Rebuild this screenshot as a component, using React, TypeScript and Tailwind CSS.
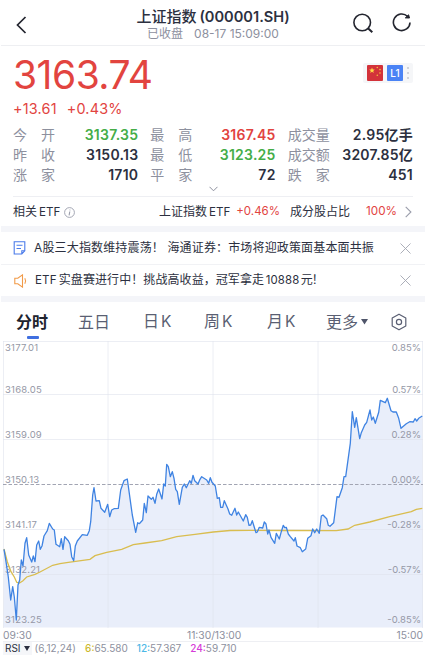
import React from 'react';

interface Stat {
  label: string;
  value: string;
  color?: string;
}

const stats: Stat[] = [
  { label: '今开', value: '3137.35', color: 'text-[#45ad48]' },
  { label: '最高', value: '3167.45', color: 'text-[#e2443f]' },
  { label: '成交量', value: '2.95亿手' },
  { label: '昨收', value: '3150.13' },
  { label: '最低', value: '3123.25', color: 'text-[#45ad48]' },
  { label: '成交额', value: '3207.85亿' },
  { label: '涨家', value: '1710' },
  { label: '平家', value: '72' },
  { label: '跌家', value: '451' },
];

const pricePoints =
  '4,549.3 6,561.7 8.3,577 10.7,600 12.7,586.7 14.3,597 16.3,620 18,585 19.7,580 21.3,560 23,566 25,543.3 26.7,537.7 28.7,555 31.7,562 33.3,556 35,561.7 36.7,545 38.7,541 40.3,549.3 42,546 44,536 47.3,530.7 49.3,523.3 52.7,529 54.3,530 56,544.3 59.7,546.7 61.3,538.7 63,549.3 64.7,536.7 68.3,540.7 70,544.3 71.7,556.7 73.7,560.7 75.3,546 77.3,541 82.3,534.7 87.3,535.3 89.3,530.7 90.7,521.7 92.7,495 94,487.7 96,501 99.3,500.7 101,508.3 104.7,512.3 107.7,504.3 109.7,516.7 111.7,510 114,508.7 118.3,508.3 120.7,490 124,480.7 127.3,479 129.3,493.3 132.3,515 135.7,532.3 137.7,522.7 139.3,523.7 142.7,520 144.3,503.3 146.3,512.7 148,496 151.3,499.3 153,497.3 155,503.3 156.7,494.3 158.7,489 162,499 163.7,484 165.3,486 166.7,464.3 168.3,466.7 170.3,476.7 172.3,471.7 174,478.3 175.7,489.3 177.3,491.7 179.3,504.3 182.3,487.3 184.3,484 186.3,487.7 189.7,480.7 191.3,483.3 193,475.3 194.7,480.7 198,484 200,479.3 201.7,476.7 206.7,480 208.7,483.3 210.3,477.7 212,482.3 215.3,486 217.3,498.3 219.3,497.7 220.7,507.3 222.7,507.3 224.3,500.7 228,509 229.7,514 231.7,515.3 235,508.3 236.7,515 238.3,512 243.3,521 245.7,514.7 247.3,517.3 249,525.3 250.7,525 252.3,520.7 256,532.7 257.3,532 259.3,527.3 262.7,528 264.3,522 266,524 267.7,534 269,530 271,537.3 274.7,543.3 276.3,533.3 279.3,539 281.3,531.7 283.3,525.3 284.7,527.7 286.3,527.3 288.3,534 290.3,536.7 294,541 295.3,537.7 297,546 300.3,547.7 302.3,551.7 305.7,549 307.7,538.3 311,535.7 312.7,529 314.7,532.7 316.7,529 319.3,533.3 321.3,516 323,515 326.7,518.7 328.3,525.3 330,526.3 333.7,522.7 337,496.7 339,497.3 342.3,487.7 344,476.7 345.7,476.7 350.3,443.3 352.3,411.7 354.7,427.3 356.3,417.7 359.7,438.7 361.3,432.7 364.7,425 366.7,422.3 370,410 371.7,420 373.3,417 375.3,423.3 378.7,412.3 380.3,400.3 385.3,402.7 387.3,398.3 391,410.7 393,412 396.3,412 398.7,418.3 401,428.3 406.3,423.7 409.7,421.7 413.3,422 415,418.7 416.7,421 418.7,418.3 422.3,416';

const averagePoints =
  '4,549 7.3,561.7 11,571.7 14.3,577 16.7,582.3 19.3,583 22.7,581 26.7,577 35,574.3 40,572 52.7,565.3 60,563.6 68.3,562.3 90,559.3 95,555.7 106.7,552.3 121.7,549.3 133.3,544.6 145,543 161.7,540.7 176.7,536.7 195,534.3 213.3,532 230,530.5 250,530.3 285,530.5 336.3,530.7 348,529 354.7,525.3 369.7,522 389.7,516.7 411.3,511.7 416.3,509.3 422.3,508.3';

const levels = [
  { y: 351, price: '3177.01', pct: '0.85%' },
  { y: 393, price: '3168.05', pct: '0.57%' },
  { y: 438, price: '3159.09', pct: '0.28%' },
  { y: 483, price: '3150.13', pct: '0.00%' },
  { y: 528, price: '3141.17', pct: '-0.28%' },
  { y: 573, price: '3132.21', pct: '-0.57%' },
  { y: 622.5, price: '3123.25', pct: '-0.85%' },
];

const Header = () => (
  <header className="h-[46px] border-b border-[#eeeff2] flex items-start justify-between pl-[14px] pr-[13px]">
    <svg className="mt-[16px] w-[59px] h-[18px]" viewBox="0 0 59 18" fill="none" stroke="#23252f" strokeWidth="1.7">
      <path d="M10.5 1 2.5 9l8 8" />
    </svg>
    <div className="text-center pt-[7px] -ml-px">
      <h1 className="text-[15px] leading-[19px] font-semibold text-[#2c3040] whitespace-nowrap">
        <span className="font-medium">上证指数</span>
        <span className="ml-[3px] text-[14.6px]">(000001.SH)</span>
      </h1>
      <p className="text-[12px] leading-[14px] text-[#8d909e] whitespace-nowrap">
        已收盘<span className="ml-[11px]">08-17 15:09:00</span>
      </p>
    </div>
    <div className="flex w-[59px] justify-between pt-[12px]">
      <svg className="w-[21px] h-[22px]" viewBox="0 0 21 22" fill="none" stroke="#23252f" strokeWidth="1.6">
        <circle cx="9.2" cy="10.5" r="8.3" />
        <path d="m15 16.2 4.3 4" strokeWidth="2" />
      </svg>
      <svg className="w-[20px] h-[22px]" viewBox="0 0 20 22" fill="none" stroke="#23252f" strokeWidth="1.6">
        <path d="M15.5 4.3A8.3 8.3 0 1 0 18 10.5" />
        <path d="m16.6 2.8.9 3.2-4.2-.1z" fill="#23252f" strokeWidth="1" />
      </svg>
    </div>
  </header>
);

const Quote = () => (
  <section className="px-[12px] h-[79px] flex justify-between">
    <div className="text-[#e2443f]">
      <div className="mt-[9px] text-[39px] leading-[39px] tracking-[-0.5px]">3163.74</div>
      <div className="mt-[6px] text-[14.4px] leading-[17px] tracking-[0.2px] flex gap-[10px]">
        <span>+13.61</span>
        <span>+0.43%</span>
      </div>
    </div>
    <div className="mt-[17px] w-[50px] h-[20px] bg-[#f5f6f8] rounded-[2px] flex items-center pl-[4px] gap-[4px]">
      <svg className="w-[16px] h-[16px]" viewBox="0 0 16 16">
        <rect width="16" height="16" rx="1" fill="#d3323a" />
        <path d="m5 2.6.8 2h2l-1.6 1.3.6 2L5 6.7 3.2 7.9l.6-2-1.6-1.3h2z" fill="#ffd944" />
        <g fill="#f5bf3f">
          <circle cx="10.3" cy="2.5" r=".8" />
          <circle cx="13" cy="4.6" r=".8" />
          <circle cx="13" cy="8" r=".8" />
          <circle cx="10.3" cy="10.3" r=".8" />
        </g>
      </svg>
      <span className="w-[16px] h-[16px] rounded-[1px] bg-[#4a83f5] text-white text-[10px] leading-[17px] font-medium text-center">L1</span>
      <svg className="w-[3px] h-[14px]" viewBox="0 0 3 14" fill="#d0d3da">
        <rect y="1" width="2" height="2" />
        <rect y="6" width="2" height="2" />
        <rect y="11" width="2" height="2" />
      </svg>
    </div>
  </section>
);

const Stats = () => (
  <section className="mx-[12px] h-[72px] border-b border-[#eeeff3]">
    <div className="grid grid-cols-3 gap-x-[12px]">
      {stats.map((s) => (
        <div key={s.label} className="h-[20px] leading-[20px] flex justify-between text-[14px] whitespace-nowrap">
          <span className="w-[42px] flex justify-between text-[#8d909e]">
            {s.label.split('').map((c) => (
              <span key={c}>{c}</span>
            ))}
          </span>
          <span className={`font-semibold tracking-[0.25px] ${s.color || 'text-[#2c3040]'}`}>{s.value}</span>
        </div>
      ))}
    </div>
    <svg className="mx-auto mt-[1px] w-[9px] h-[6px]" viewBox="0 0 9 6" fill="none" stroke="#8d909e">
      <path d="m.5.8 4 4 4-4" />
    </svg>
  </section>
);

const EtfRow = () => (
  <section className="h-[29px] px-[12px] pt-px flex items-center text-[12px] text-[#2c3040] whitespace-nowrap">
    <span>相关<span className="ml-[2px] text-[11.6px]">ETF</span></span>
    <svg className="ml-[4px] w-[11px] h-[11px]" viewBox="0 0 11 11" fill="none" stroke="#9a9dab" strokeWidth=".9">
      <circle cx="5.5" cy="5.5" r="4.9" />
      <path d="M5.8 4.5 5.1 8.4M6 2.6l-.1.8" strokeWidth="1.1" />
    </svg>
    <span className="ml-auto">上证指数<span className="ml-[2px] text-[11.6px]">ETF</span></span>
    <span className="ml-[6px] text-[11.5px] text-[#e2443f]">+0.46%</span>
    <span className="ml-[10px]">成分股占比</span>
    <span className="ml-[16px] text-[11.7px] text-[#e2443f]">100%</span>
    <svg className="ml-[8px] mr-[1px] w-[7px] h-[12px]" viewBox="0 0 7 12" fill="none" stroke="#9a9dab" strokeWidth="1.1">
      <path d="m.7.8 5.2 5.2-5.2 5.2" />
    </svg>
  </section>
);

const CloseIcon = () => (
  <svg className="ml-auto mr-[2px] w-[11px] h-[11px]" viewBox="0 0 11 11" stroke="#a3a6b1" strokeWidth=".9">
    <path d="m.5.5 10 10M10.5.5l-10 10" />
  </svg>
);

const Notices = () => (
  <section className="border-y-[6px] border-[#f4f5f9] text-[12px] tracking-[0.15px] text-[#2c3040] whitespace-nowrap">
    <div className="h-[33px] px-[12px] flex items-center border-b border-[#f1f2f5]">
      <svg className="w-[13px] h-[14px] mr-[8px]" viewBox="0 0 13 14" fill="none" stroke="#4a7bea" strokeWidth="1.1">
        <path d="M1.2.8h10.6v9L8.8 13H1.2zM3.5 4.3h6M3.5 7.5h4.5M12 9.7H8.8V13" />
      </svg>
      <span>A股三大指数维持震荡！ 海通证券：市场将迎政策面基本面共振</span>
      <CloseIcon />
    </div>
    <div className="h-[31px] px-[12px] flex items-center">
      <svg className="w-[14px] h-[14px] ml-[1px] mr-[7px]" viewBox="0 0 14 14" fill="none" stroke="#f19a48" strokeWidth="1.1">
        <path d="M.8 4.3h3L8.5.9v12.2L3.8 9.7h-3z" />
        <path d="M10.8 4.2q1.7 2.8 0 5.6" />
      </svg>
      <span>
        <span className="text-[11.6px]">ETF</span>
        <span className="ml-[2px] tracking-[0.08px]">实盘赛进行中！挑战高收益，冠军拿走</span>
        <span className="mx-[1.5px] text-[11.4px]">10888</span>
        <span className="tracking-[-1px]">元！</span>
      </span>
      <CloseIcon />
    </div>
  </section>
);

const Tabs = () => (
  <nav className="h-[39px] pl-[15px] flex items-center text-[16px] text-[#5a5f73] whitespace-nowrap">
    <span className="relative font-bold text-[#20232e]">
      分时
      <i className="absolute left-[11px] top-[26px] w-[12px] h-[3px] rounded-[1px] bg-[#3f6fe0]" />
    </span>
    <span className="w-[32px] ml-[30px]">五日</span>
    <span className="w-[28px] ml-[33px]">日<span className="ml-[2px] text-[15.5px]">K</span></span>
    <span className="w-[28px] ml-[33px]">周<span className="ml-[2px] text-[15.5px]">K</span></span>
    <span className="w-[28px] ml-[35px]">月<span className="ml-[2px] text-[15.5px]">K</span></span>
    <span className="ml-[31px]">更多</span>
    <svg className="ml-[3px] w-[7px] h-[6px]" viewBox="0 0 7 6" fill="#4f556a">
      <path d="M0 0h7L3.5 5.5z" />
    </svg>
    <svg className="ml-auto mr-[18px] w-[16px] h-[18px]" viewBox="0 0 16 18" fill="none" stroke="#5a5f73" strokeWidth="1.2">
      <path d="M8 1.2 14.8 5v8L8 16.8 1.2 13V5z" strokeLinejoin="round" />
      <circle cx="8" cy="9" r="2.6" />
    </svg>
  </nav>
);

const Chart = () => (
  <svg className="-ml-px block w-[428px] h-[287px]" viewBox="0 341 428 287">
    <polygon points={`3.5,627.5 ${pricePoints} 423,627.5`} fill="#e9eefa" />
    <g stroke="#dfe2ec" strokeOpacity=".6" strokeWidth="1">
      <path d="M3 341.5h420M3 394.5h420M3 439.5h420M3 529.5h420M3 574.5h420" />
      <path d="M3.5 341v287M108 341v287M213 341v287M318 341v287M422.5 341v287" />
    </g>
    <path d="M3 484.5h420" stroke="#a2a5b3" strokeDasharray="3.5 2" />
    <g fontSize="9.5" fill="#9598a6">
      {levels.map((l) => (
        <React.Fragment key={l.price}>
          <text x="5" y={l.y} letterSpacing=".2">{l.price}</text>
          <text x="421" y={l.y} textAnchor="end">{l.pct}</text>
        </React.Fragment>
      ))}
    </g>
    <polyline points={averagePoints} fill="none" stroke="#d9bd4f" strokeWidth="1.3" />
    <polyline points={pricePoints} fill="none" stroke="#3f83e2" strokeWidth="1.3" strokeLinejoin="round" />
  </svg>
);

const Footer = () => (
  <footer className="mx-[2px] text-[10.3px] text-[#8d909e]">
    <div className="h-[14px] leading-[15px] flex justify-between border-b border-[#eeeff3]">
      <span>09:30</span>
      <span>11:30/13:00</span>
      <span>15:00</span>
    </div>
    <div className="h-[14px] border-b border-[#eeeff3] flex items-center whitespace-nowrap text-[10px]">
      <span className="h-full px-[2px] bg-[#f5f6f9] flex items-center gap-[3px] text-[#2c3040]">
        RSI
        <svg className="w-[6px] h-[5px]" viewBox="0 0 6 5" fill="#2c3040">
          <path d="M0 0h6L3 5z" />
        </svg>
      </span>
      <span className="ml-[3px] tracking-[0.1px]">(6,12,24)</span>
      <span className="ml-[9px]"><b className="font-medium text-[#cdb92f]">6:</b>65.580</span>
      <span className="ml-[9px]"><b className="font-medium text-[#4cb8e6]">12:</b>57.367</span>
      <span className="ml-[9px]"><b className="font-medium text-[#d63bd8]">24:</b>59.710</span>
    </div>
  </footer>
);

const App = () => {
  return (
    <div className="w-[428px] h-[655px] overflow-hidden bg-white font-['Inter','Noto_Sans_CJK_SC',sans-serif]">
      <div className="ml-px w-[424px]">
        <Header />
        <Quote />
        <Stats />
        <EtfRow />
        <Notices />
        <Tabs />
        <Chart />
        <Footer />
      </div>
    </div>
  );
};

export default App;
